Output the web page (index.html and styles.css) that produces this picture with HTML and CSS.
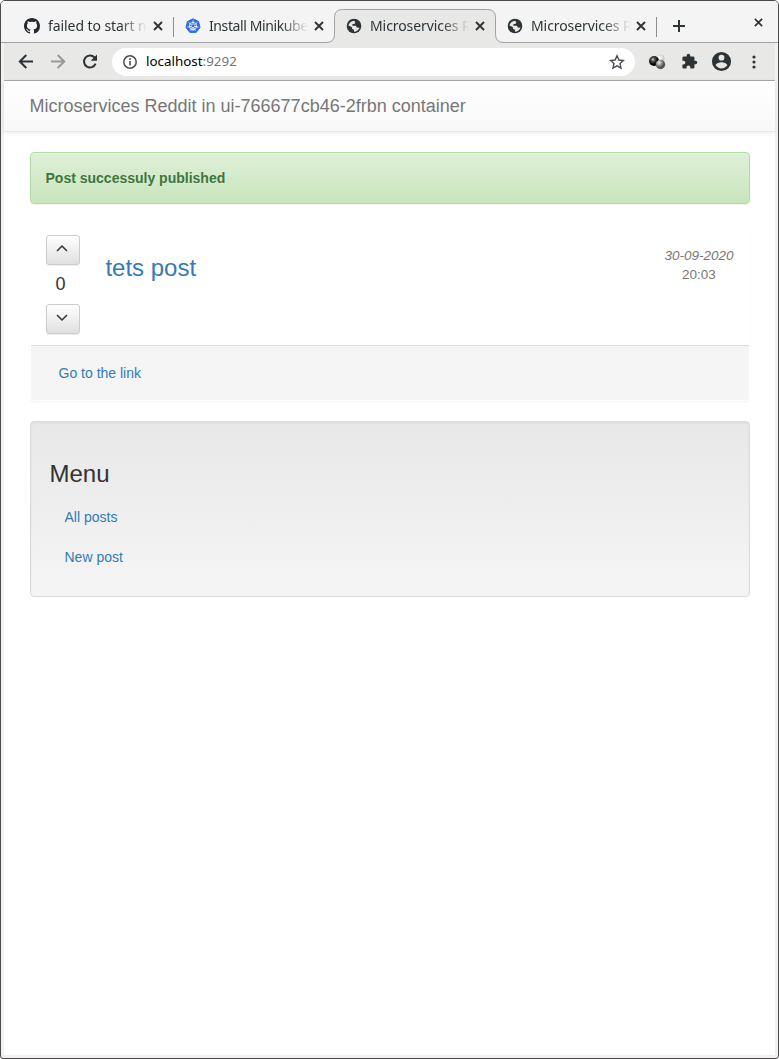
FILE: index.html
```html
<!DOCTYPE html>
<html lang="en">
<head>
<meta charset="utf-8">
<title>Microservices Reddit</title>
<link rel="stylesheet" href="styles.css">
</head>
<body>
<svg class="defs" width="0" height="0" aria-hidden="true">
  <defs>
    <symbol id="x" viewBox="0 0 10 10"><path d="M1 1l8 8M9 1l-8 8" stroke="#2e3436" stroke-width="1.9" fill="none"/></symbol>
    <symbol id="globe" viewBox="0 0 16 16"><circle cx="8" cy="8" r="7.3" fill="#2e3436"/><path d="M2.4 7.6C3 4.800 5.200 2.900 8.200 2.700L9.300 4.300 8.700 5.800 6.400 6.200 6.300 7.700 9.900 7.800 10.800 9.400 13.500 9.700C12.700 12 10.600 13.600 8 13.700L7.900 11.700 6 10.700 5.800 9z" fill="#e8e8e7"/></symbol>
  </defs>
</svg>
<div class="window">
  <header class="tabs">
    <div class="tab">
      <svg class="fav" viewBox="0 0 16 16"><path fill="#24292e" d="M8 0C3.580 0 0 3.580 0 8c0 3.540 2.290 6.530 5.470 7.590.4.070.55-.17.55-.38 0-.19-.01-.82-.01-1.490-2.010.37-2.530-.49-2.690-.94-.09-.23-.48-.94-.82-1.130-.28-.15-.68-.52-.01-.53.63-.01 1.080.58 1.230.82.720 1.210 1.870.87 2.330.66.070-.52.280-.87.510-1.070-1.780-.2-3.640-.89-3.640-3.950 0-.87.310-1.590.82-2.150-.08-.2-.36-1.020.08-2.120 0 0 .67-.21 2.200.82.640-.18 1.320-.27 2-.27s1.360.09 2 .27c1.530-1.040 2.200-.82 2.200-.82.440 1.100.16 1.920.08 2.120.51.560.82 1.270.82 2.150 0 3.070-1.870 3.750-3.650 3.950.29.25.54.73.54 1.480 0 1.070-.01 1.930-.01 2.200 0 .21.150.46.550.38A8.010 8.010 0 0 0 16 8c0-4.420-3.580-8-8-8z"/></svg>
      <span class="label">failed to start n</span><svg class="close"><use href="#x"/></svg>
    </div>
    <div class="tab ruled">
      <svg class="fav" viewBox="0 0 16 16"><path fill="#326ce5" d="M8 .8l5.600 2.700 1.400 6-3.900 4.900H4.900L1 9.500l1.400-6z" stroke="#326ce5" stroke-linejoin="round"/><g fill="none" stroke="#fff" stroke-width=".8"><circle cx="8" cy="8" r="3.600"/><path d="M8 2.400V7M8 9v4M3.700 4.500L7 7.300M12.300 4.500L9 7.300M2.600 9.200L7 8.300M13.400 9.200L9 8.300M5.600 12.800L7.500 9M10.400 12.800L8.500 9"/></g></svg>
      <span class="label snug">Install Minikube</span><svg class="close"><use href="#x"/></svg>
    </div>
    <div class="tab active">
      <svg class="shape" viewBox="0 0 178 34"><path d="M0 33.500Q8.500 33.500 8.500 25.500V8.500Q8.500.5 16.500.5H161.500Q169.500.5 169.500 8.500V25.500Q169.500 33.500 178 33.500V34H0z" fill="#e8e8e7"/><path d="M0 33.500Q8.500 33.500 8.500 25.500V8.500Q8.500.5 16.500.5H161.500Q169.500.5 169.500 8.500V25.500Q169.500 33.500 178 33.500" fill="none" stroke="#a1a1a0"/></svg>
      <svg class="fav"><use href="#globe"/></svg>
      <span class="label">Microservices R</span><svg class="close"><use href="#x"/></svg>
    </div>
    <div class="tab">
      <svg class="fav"><use href="#globe"/></svg>
      <span class="label">Microservices R</span><svg class="close"><use href="#x"/></svg>
    </div>
    <svg class="plus" viewBox="0 0 12 12"><path d="M6 0v12M0 6h12" stroke="#2e3436" stroke-width="2"/></svg>
    <svg class="quit"><use href="#x"/></svg>
  </header>
  <nav class="toolbar">
    <svg class="nav" viewBox="0 0 16 16"><path d="M15 7.500H2M8.300 1L1.800 7.500l6.500 6.500" fill="none" stroke="#2e3436" stroke-width="2"/></svg>
    <svg class="nav" viewBox="0 0 16 16"><path d="M1 7.500h13M7.700 1L14.200 7.500l-6.500 6.500" fill="none" stroke="#979a9a" stroke-width="2"/></svg>
    <svg class="nav" viewBox="0 0 16 16"><path d="M13.600 9.700A6 6 0 1 1 12.500 3.500" fill="none" stroke="#2e3436" stroke-width="2"/><path d="M15 .5v6.300H8.700z" fill="#2e3436"/></svg>
    <div class="address">
      <svg class="info" viewBox="0 0 14 14"><circle cx="7" cy="7" r="6.200" fill="none" stroke="#4a4e50" stroke-width="1.500"/><path d="M7 3.300v1.600M7 6v4.500" stroke="#4a4e50" stroke-width="1.600"/></svg>
      <span class="url">localhost<i>:9292</i></span>
      <svg class="star" viewBox="0 0 16 16"><path d="M8 1.800l1.900 4.200 4.500.5-3.400 3.100 1 4.500L8 11.800l-4 2.300 1-4.500L1.600 6.500 6.100 6z" fill="none" stroke="#4a4e50" stroke-width="1.400"/></svg>
    </div>
    <svg class="ext balls" viewBox="0 0 18 18"><defs><radialGradient id="b1" cx=".4" cy=".35"><stop offset="0" stop-color="#ddd"/><stop offset=".35" stop-color="#555"/><stop offset="1" stop-color="#000"/></radialGradient><radialGradient id="b2" cx=".35" cy=".3"><stop offset="0" stop-color="#eee"/><stop offset="1" stop-color="#555"/></radialGradient><radialGradient id="b3" cx=".4" cy=".4"><stop offset="0" stop-color="#fff"/><stop offset="1" stop-color="#ccc"/></radialGradient></defs><circle cx="12.500" cy="5.500" r="4" fill="url(#b3)"/><circle cx="6" cy="8" r="5" fill="url(#b1)"/><circle cx="12.500" cy="11.500" r="4.700" fill="url(#b2)"/></svg>
    <svg class="ext puzzle" viewBox="0 0 24 24"><path fill="#2e3436" d="M20.500 11H19V7a2 2 0 0 0-2-2h-4V3.500a2.500 2.500 0 0 0-5 0V5H4a2 2 0 0 0-2 2v3.800h1.500a2.700 2.700 0 0 1 0 5.400H2V20a2 2 0 0 0 2 2h3.800v-1.500a2.700 2.700 0 0 1 5.400 0V22H17a2 2 0 0 0 2-2v-4h1.500a2.500 2.500 0 0 0 0-5z"/></svg>
    <svg class="ext user" viewBox="0 0 24 24"><path fill="#2e3436" d="M12 2a10 10 0 1 0 0 20 10 10 0 0 0 0-20zm0 3a3 3 0 1 1 0 6 3 3 0 0 1 0-6zm0 14.200a7.200 7.200 0 0 1-6-3.220c.03-1.990 4-3.080 6-3.080s5.970 1.090 6 3.080a7.200 7.200 0 0 1-6 3.220z"/></svg>
    <svg class="ext dots" viewBox="0 0 4 14"><g fill="#2e3436"><circle cx="2" cy="2" r="1.600"/><circle cx="2" cy="7" r="1.600"/><circle cx="2" cy="12" r="1.600"/></g></svg>
  </nav>
  <main class="page">
    <div class="navbar">Microservices Reddit in ui-766677cb46-2frbn container</div>
    <div class="container">
      <div class="alert">Post successuly published</div>
      <article class="panel">
        <div class="body">
          <div class="votes">
            <button class="btn up"><svg viewBox="0 0 12 8"><path d="M1 7l5-5 5 5" fill="none" stroke="#333" stroke-width="1.500"/></svg></button>
            <span class="score">0</span>
            <button class="btn"><svg viewBox="0 0 12 8"><path d="M1 1l5 5 5-5" fill="none" stroke="#333" stroke-width="1.500"/></svg></button>
          </div>
          <a class="title">tets post</a>
          <div class="date"><em>30-09-2020</em><span>20:03</span></div>
        </div>
        <div class="footer"><a>Go to the link</a></div>
      </article>
      <aside class="well">
        <h3>Menu</h3>
        <a>All posts</a>
        <a>New post</a>
      </aside>
    </div>
  </main>
</div>
</body>
</html>
```
FILE: styles.css
```css
* { box-sizing: border-box; }
html { background: #fff; }
body { margin: 0; font: 14px/20px "Liberation Sans", Arial, sans-serif; color: #333; }
svg { display: block; flex: none; }
.defs { position: absolute; }
.window { display: flex; flex-direction: column; height: 1059px; border: 1px solid #4d4a4c; border-radius: 5px 5px 3px 3px; background: #f2f1f1; overflow: hidden; }
.tabs { display: flex; height: 42px; padding: 8px 14px 0 13px; background: #f4f4f4; border-bottom: 1px solid #a1a1a0; font: 14px/20px "Noto Sans", sans-serif; color: #2e3436; flex: none; }
.tab { position: relative; display: flex; align-items: center; width: 161px; height: 34px; padding: 0 10px; flex: none; }
.tab.ruled::before, .tabs .tab:nth-child(4)::after { content: ""; position: absolute; left: -2px; top: 8px; width: 1px; height: 20px; background: #8b8e8f; }
.tabs .tab:nth-child(4)::after { left: auto; right: 1px; }
.shape { position: absolute; left: -10px; top: 0; width: 178px; height: 34px; }
.fav { position: relative; width: 16px; height: 16px; margin-right: 8px; }
.label { position: relative; width: 105px; margin-right: -7px; letter-spacing: -.08px; white-space: nowrap; -webkit-mask-image: linear-gradient(90deg, #000 72px, transparent 99px); mask-image: linear-gradient(90deg, #000 72px, transparent 99px); }
.label.snug { letter-spacing: -.4px; }
.close { position: relative; width: 10px; height: 10px; margin-left: 7px; }
.plus { width: 12px; height: 12px; margin: 11px 0 0 15px; }
.quit { width: 9px; height: 9px; margin: 8.500px 1.500px 0 auto; }
.toolbar { display: flex; align-items: center; height: 38px; margin: 0 3px; padding-left: 14px; background: #e8e8e7; border-bottom: 1px solid #a9a9a8; flex: none; }
.nav { width: 16px; height: 16px; margin-right: 16px; }
.address { display: flex; align-items: center; width: 523px; height: 28px; padding: 0 10px 0 11px; margin-left: -2px; border-radius: 14px; background: #fff; }
.info { width: 14px; height: 14px; margin-right: 9px; }
.url { position: relative; top: -1px; font: 13.400px/20px "Noto Sans", sans-serif; color: #000; }
.url i { font-style: normal; color: #75787a; }
.star { width: 16px; height: 16px; margin-left: auto; }
.balls { width: 18px; height: 18px; margin-left: 12.500px; }
.puzzle { width: 17px; height: 17px; margin-left: 15px; }
.user { width: 23px; height: 23px; margin-left: 12px; }
.dots { width: 4px; height: 14px; margin-left: 19px; }
.page { flex: 1; margin: 0 3px 3px; background: #fff; }
.navbar { height: 51px; padding: 15px 25.500px; font-size: 18px; color: #777; background: linear-gradient(#fff, #f8f8f8); border-bottom: 1px solid #e7e7e7; box-shadow: 0 1px 5px rgba(0,0,0,.075); }
.container { padding: 20px 25px 0 26px; }
.alert { height: 52px; padding: 15px 14.500px; margin-bottom: 20px; font-weight: bold; color: #3c763d; background: linear-gradient(#dff0d8, #c8e5bc); border: 1px solid #b2dba1; border-radius: 4px; box-shadow: inset 0 1px 0 rgba(255,255,255,.25), 0 1px 2px rgba(0,0,0,.05); text-shadow: 0 1px 0 rgba(255,255,255,.2); }
.panel { height: 177px; margin-bottom: 20px; border: 1px solid transparent; border-radius: 4px; box-shadow: 0 1px 2px rgba(0,0,0,.05); }
.body { display: flex; height: 120px; padding: 10px 15.500px 0 15px; }
.votes { width: 59.400px; }
.btn { display: grid; place-items: center; width: 34px; height: 30px; padding: 0 2px 2px 0; border: 1px solid #ccc; border-radius: 3px; background: linear-gradient(#fff, #e0e0e0); box-shadow: inset 0 1px 0 rgba(255,255,255,.15), 0 1px 1px rgba(0,0,0,.075); }
.btn.up { padding-bottom: 4px; }
.btn svg { width: 12px; height: 8px; }
.score { display: block; margin: 9px 0 10px 9.500px; font-size: 18px; }
a { color: #337ab7; }
.title { margin-top: 20px; font-size: 24px; line-height: 26px; }
.date { display: flex; flex-direction: column; align-items: center; margin: 11px 0 0 auto; color: #777; font-size: 13.500px; line-height: 19px; }
.footer { height: 55px; padding: 17px 27.500px; background: #f5f5f5; border-top: 1px solid #ddd; border-radius: 0 0 3px 3px; }
.well { display: flex; flex-direction: column; height: 176px; padding: 39px 18.500px; background: linear-gradient(#e8e8e8, #f5f5f5); border: 1px solid #dcdcdc; border-radius: 4px; box-shadow: inset 0 1px 3px rgba(0,0,0,.05), 0 1px 0 rgba(255,255,255,.1); }
.well h3 { margin: 0 0 10px; font-size: 24px; font-weight: normal; line-height: 26px; }
.well a { padding: 10px 15px; }
```
